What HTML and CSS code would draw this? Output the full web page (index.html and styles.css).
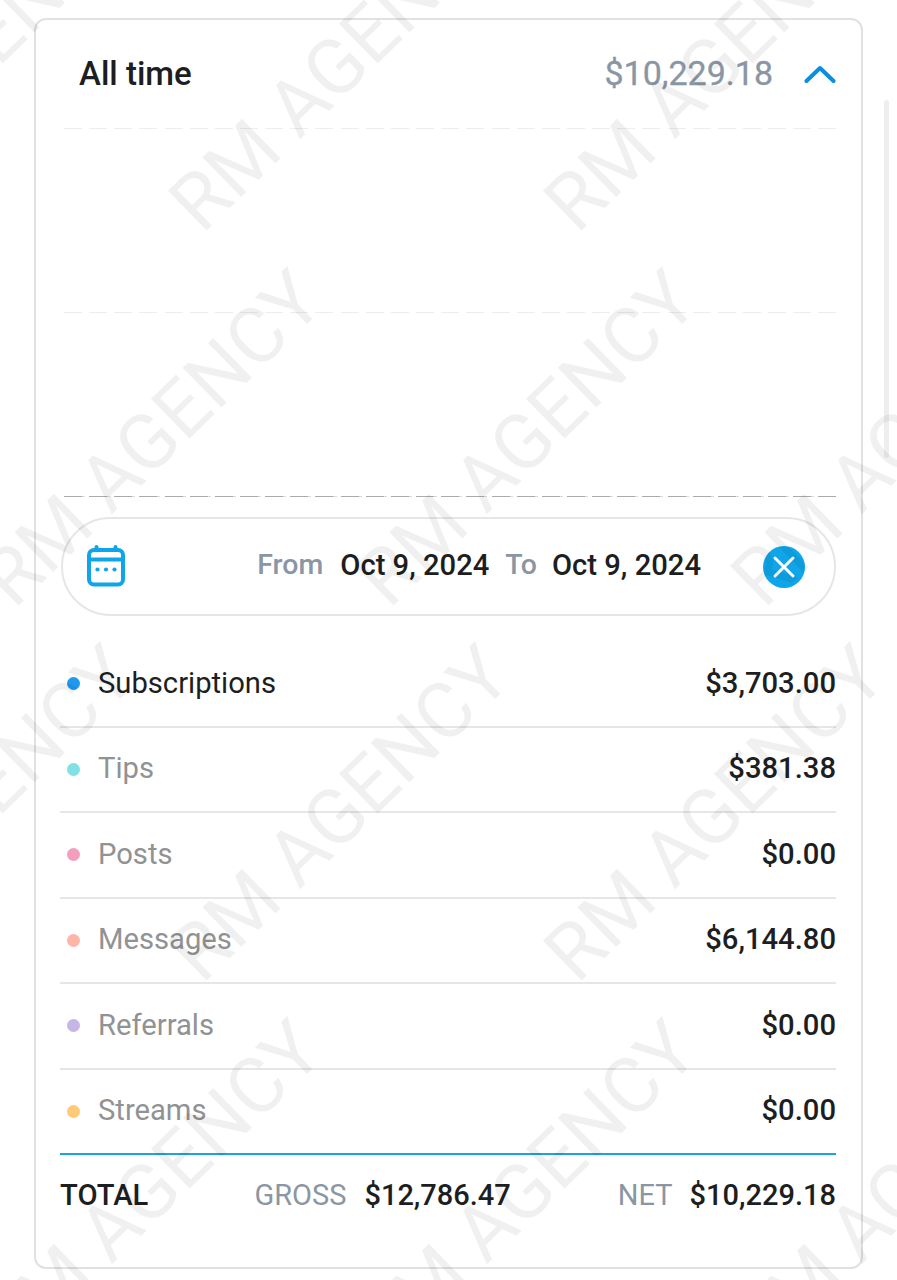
FILE: index.html
```html
<!DOCTYPE html>
<html lang="en">
<head>
  <meta charset="UTF-8" />
  <title>Statements - All time</title>
  <meta name="viewport" content="width=device-width, initial-scale=1" />
  <link rel="stylesheet" href="styles.css">
</head>
<body>
  <div class="page">
    <div class="card">
      <div class="card-head">
        <span class="period">All time</span>
        <span class="period-sum">$10,229.18</span>
        <svg class="chevron" viewBox="0 0 32 20" width="32" height="20"><path d="M2.5 17 L16 4 L29.500 17" /></svg>
      </div>

      <div class="chart">
        <div class="grid-line"></div>
        <div class="grid-line"></div>
        <div class="grid-line base"></div>
      </div>

      <div class="date-pill">
        <svg class="cal" viewBox="0 0 38 42" width="38" height="42">
          <rect x="2" y="5" width="34" height="34.500" rx="5" />
          <path d="M2 14.500 H36 M9.500 2 V5 M28.500 2 V5" />
          <circle cx="10.500" cy="24.500" r="2.100" />
          <circle cx="19" cy="24.500" r="2.100" />
          <circle cx="27.500" cy="24.500" r="2.100" />
        </svg>
        <div class="range">
          <span class="lbl">From</span><span class="val">Oct 9, 2024</span>
          <span class="lbl">To</span><span class="val">Oct 9, 2024</span>
        </div>
        <svg class="clear" viewBox="0 0 42 42" width="42" height="42">
          <circle cx="21" cy="21" r="21" />
          <path d="M12 12 L30 30 M30 12 L12 30" />
        </svg>
      </div>

      <div class="rows">
        <div class="row active"><i class="dot blue"></i><span class="name">Subscriptions</span><span class="amt">$3,703.00</span></div>
        <div class="row"><i class="dot teal"></i><span class="name">Tips</span><span class="amt">$381.38</span></div>
        <div class="row"><i class="dot pink"></i><span class="name">Posts</span><span class="amt">$0.00</span></div>
        <div class="row"><i class="dot salmon"></i><span class="name">Messages</span><span class="amt">$6,144.80</span></div>
        <div class="row"><i class="dot lilac"></i><span class="name">Referrals</span><span class="amt">$0.00</span></div>
        <div class="row"><i class="dot amber"></i><span class="name">Streams</span><span class="amt">$0.00</span></div>
      </div>

      <div class="total">
        <span class="total-name">TOTAL</span>
        <span class="lbl gross">GROSS</span><span class="val">$12,786.47</span>
        <span class="lbl net">NET</span><span class="val net-val">$10,229.18</span>
      </div>
    </div>
    <div class="scroll-thumb"></div>
  </div>

  <!-- watermark sits over everything -->
  <svg class="watermark" viewBox="0 0 897 1280" width="897" height="1280">
    <text transform="translate(-173 235) rotate(-44.300)">RM AGENCY</text>
    <text transform="translate(202 235) rotate(-44.300)">RM AGENCY</text>
    <text transform="translate(577 235) rotate(-44.300)">RM AGENCY</text>
    <text transform="translate(-361 610) rotate(-44.300)">RM AGENCY</text>
    <text transform="translate(14 610) rotate(-44.300)">RM AGENCY</text>
    <text transform="translate(389 610) rotate(-44.300)">RM AGENCY</text>
    <text transform="translate(764 610) rotate(-44.300)">RM AGENCY</text>
    <text transform="translate(-173 985) rotate(-44.300)">RM AGENCY</text>
    <text transform="translate(202 985) rotate(-44.300)">RM AGENCY</text>
    <text transform="translate(577 985) rotate(-44.300)">RM AGENCY</text>
    <text transform="translate(14 1360) rotate(-44.300)">RM AGENCY</text>
    <text transform="translate(389 1360) rotate(-44.300)">RM AGENCY</text>
    <text transform="translate(764 1360) rotate(-44.300)">RM AGENCY</text>
  </svg>
</body>
</html>
```

FILE: styles.css
```css
html, body {
  margin: 0;
  background: #fff;
}
body {
  font-family: Roboto, "Liberation Sans", sans-serif;
  color: #1c1e21;
  width: 897px;
  height: 1280px;
  overflow: hidden;
  position: relative;
}
.page {
  padding: 18px 34px 0;
  display: flex;
}
.card {
  width: 829px;
  height: 1251px;
  box-sizing: border-box;
  border: 2px solid #dfe1e3;
  border-radius: 12px;
  padding: 0 25px 0 25px;
  flex: none;
}
.scroll-thumb {
  position: absolute;
  left: 884px;
  top: 100px;
  width: 5px;
  height: 358px;
  background: #eceef0;
  border-radius: 3px;
}

/* header */
.card-head {
  display: flex;
  align-items: center;
  height: 108px;
  padding-left: 18px;
}
.period {
  font-size: 33px;
  font-weight: 500;
  flex: 1;
  position: relative;
  top: -1px;
}
.period-sum {
  font-size: 34px;
  color: #8a96a3;
  margin-right: 31px;
  -webkit-text-stroke: 0.3px #8a96a3;
  position: relative;
  top: -1px;
}
.chevron path {
  fill: none;
  stroke: #0a8fe0;
  stroke-width: 4;
  stroke-linecap: round;
  stroke-linejoin: round;
}

/* empty chart */
.chart {
  height: 369px;
  margin-left: 3px;
  display: flex;
  flex-direction: column;
  justify-content: space-between;
}
.grid-line {
  height: 1px;
  background: repeating-linear-gradient(90deg, #ebedef 0 18px, transparent 18px 25.150px);
}
.grid-line.base {
  background: repeating-linear-gradient(90deg, #a9acaf 0 18px, #d8d9da 18px 21px, #fff 21px 25.150px);
}

/* date range */
.date-pill {
  margin-top: 20px;
  height: 99px;
  box-sizing: border-box;
  border: 2px solid #e4e6e8;
  border-radius: 50px;
  display: flex;
  align-items: center;
  padding: 0 29px 0 24px;
}
.cal {
  flex: none;
  position: relative;
  top: -1px;
}
.cal rect, .cal path {
  fill: none;
  stroke: #0ea5e9;
  stroke-width: 4;
  stroke-linecap: round;
}
.cal circle {
  fill: #0ea5e9;
}
.range {
  flex: 1;
  display: flex;
  justify-content: flex-end;
  align-items: center;
  padding-right: 62px;
  position: relative;
  top: -2px;
}
.range .lbl {
  font-size: 28.500px;
}
.clear {
  flex: none;
}
.clear circle {
  fill: #0ea5e9;
}
.clear path {
  fill: none;
  stroke: #fff;
  stroke-width: 3;
  stroke-linecap: round;
}
.lbl {
  color: #8a96a3;
  font-size: 29px;
  font-weight: 500;
}
.val {
  font-size: 29.200px;
  font-weight: 500;
  margin-left: 17px;
}
.range .lbl + .val + .lbl {
  margin-left: 16px;
}
.range .lbl + .val + .lbl + .val {
  margin-left: 15px;
}

/* rows */
.rows {
  margin-top: 26px;
  margin-left: -1px;
}
.row {
  height: 85.500px;
  box-sizing: border-box;
  border-bottom: 2px solid #e4e6e8;
  display: flex;
  align-items: center;
  font-size: 29.200px;
}
.row > * {
  position: relative;
  top: -1px;
}
.row > .dot {
  top: 0;
}
.row:last-child {
  border-bottom-color: #1aa5dc;
}
.dot {
  width: 13px;
  height: 13px;
  border-radius: 50%;
  margin: 0 18px 0 7px;
  flex: none;
}
.dot.blue { background: #1f98ee; }
.dot.teal { background: #7fe0e6; }
.dot.pink { background: #f29ebc; }
.dot.salmon { background: #ffb5a5; }
.dot.lilac { background: #c5b6e6; }
.dot.amber { background: #ffc97a; }
.name {
  flex: 1;
  color: #909294;
}
.row.active .name {
  color: #1c1e21;
}
.amt {
  font-weight: 500;
}

/* total */
.total {
  display: flex;
  align-items: center;
  height: 80px;
  margin-left: -1px;
}
.total-name {
  font-size: 29.200px;
  font-weight: 500;
  flex: 1;
}
.total .lbl {
  font-weight: 400;
}
.total .net {
  margin-left: 107px;
}
.total .val {
  font-size: 29px;
  margin-left: 18px;
}
.total .net-val {
  margin-left: 17px;
}

.watermark {
  position: absolute;
  left: 0;
  top: 0;
  pointer-events: none;
}
.watermark text {
  font-family: Roboto, "Liberation Sans", sans-serif;
  font-size: 78px;
  font-weight: 400;
  fill: #000;
  fill-opacity: 0.06;
}
```
